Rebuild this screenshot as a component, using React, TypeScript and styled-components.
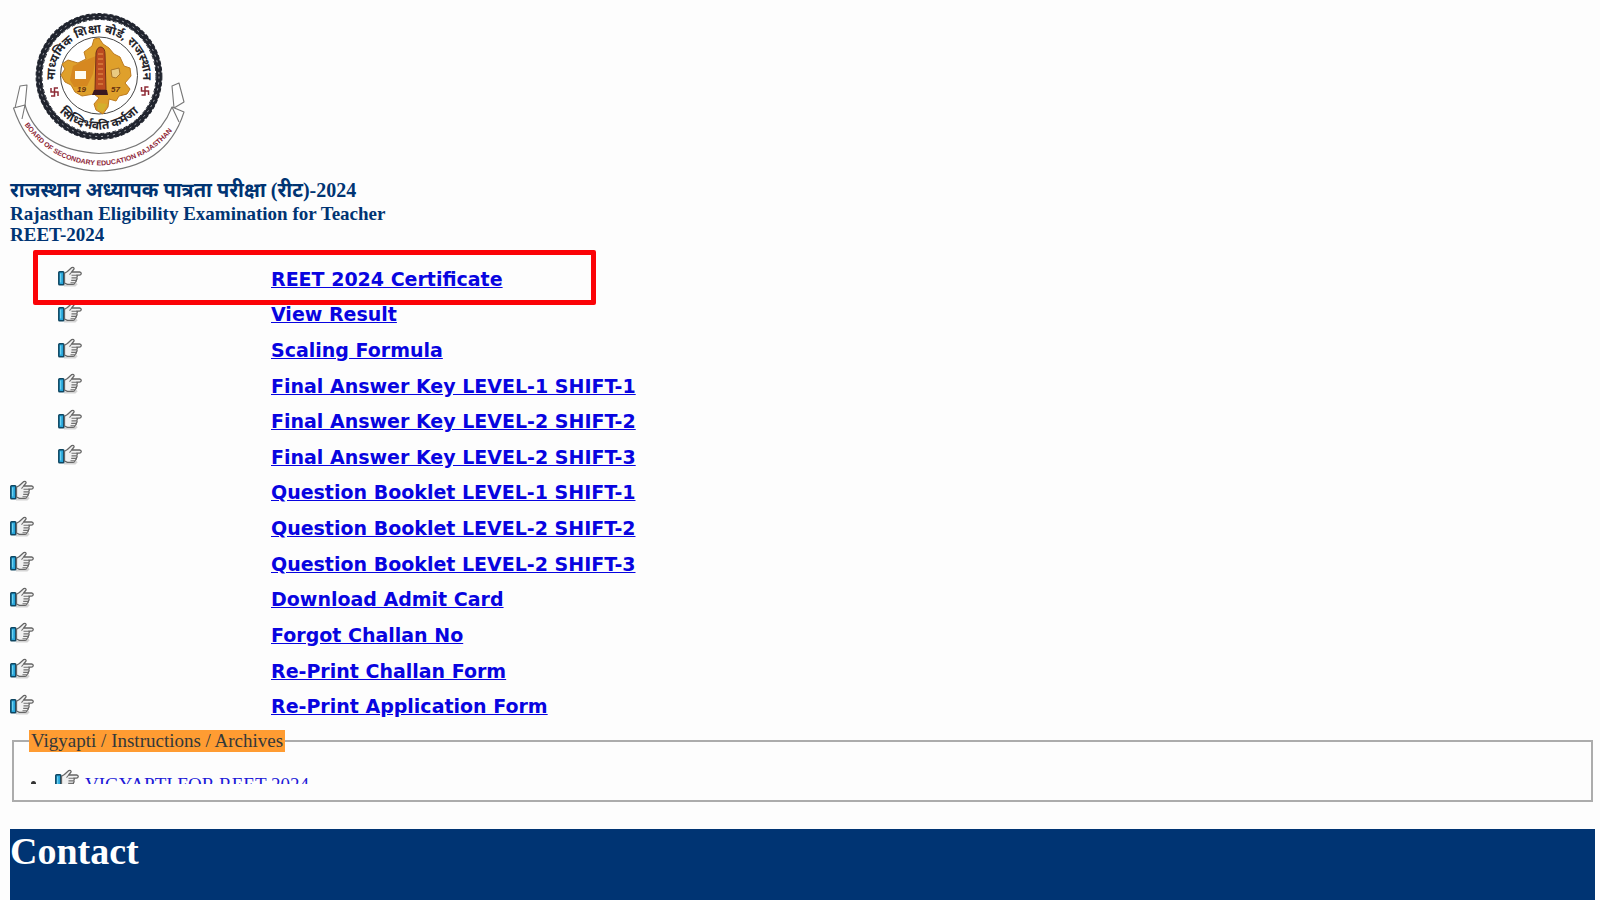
import React from "react";
import styled, { createGlobalStyle } from "styled-components";

const NAVY = "#003473";

const GlobalStyle = createGlobalStyle`
  body {
    margin: 0;
    background: #fdfdfd;
    font-family: "Liberation Serif", "Noto Sans", serif;
    font-size: 19px;
  }
`;

const Page = styled.div`
  display: flex;
  flex-direction: column;
  padding: 10px 5px 0 10px;
  min-height: 100vh;
  box-sizing: border-box;
`;

const Header = styled.header`
  display: flex;
  flex-direction: column;
  align-items: flex-start;
`;

const Titles = styled.h1`
  display: flex;
  flex-direction: column;
  margin: 0;
  color: ${NAVY};
  font-size: 19px;
  line-height: 21px;
  font-weight: bold;
`;

const HindiTitle = styled.span`
  font-size: 20px;
  line-height: 25px;
`;

const Menu = styled.ul`
  display: grid;
  grid-auto-rows: 1fr;
  min-height: 463px;
  margin: 16px 0 0;
  padding: 0;
  list-style: none;
`;

const MenuItem = styled.li<{ $indent?: boolean }>`
  position: relative;
  display: grid;
  grid-template-columns: ${(p) => (p.$indent ? "213px" : "261px")} 1fr;
  padding-left: ${(p) => (p.$indent ? "48px" : "0")};
  align-items: center;

  > svg {
    margin-bottom: 3px;
  }
`;

const MenuLink = styled.a`
  justify-self: start;
  color: #0804e0;
  font-family: "DejaVu Sans", sans-serif;
  font-size: 19px;
  line-height: 28px;
  font-weight: bold;
  text-decoration: underline;
`;

const Highlight = styled.span`
  position: absolute;
  left: 23px;
  top: -11px;
  width: 563px;
  height: 55px;
  box-sizing: border-box;
  border: 5px solid #fb0307;
  border-radius: 2px;
  z-index: 1;
  pointer-events: none;
`;

const Archives = styled.fieldset`
  margin: 6px 2px 0;
  padding: 0 17px 16px;
  border: 2px solid #acacac;
`;

const Legend = styled.legend`
  margin-left: -2px;
  padding: 0 2px;
  background: #ff9c32;
  color: #33383a;
  font-size: 19px;
  line-height: 22px;
`;

const Ticker = styled.div`
  height: 32px;
  overflow: hidden;
`;

const Notices = styled.ul`
  margin: 0;
  padding: 17px 0 0;
  list-style: none;
`;

const Notice = styled.li`
  &::before {
    content: "";
    display: inline-block;
    width: 5px;
    height: 6px;
    margin-right: 19px;
    border-radius: 3px;
    background: #333;
    vertical-align: 4px;
  }
`;

const NoticeLink = styled.a`
  color: #2018d8;
  text-decoration: none;

  > svg {
    margin-right: 6px;
  }
`;

const Footer = styled.footer`
  flex: 1;
  margin-top: 27px;
  min-height: 71px;
  background: ${NAVY};
`;

const FooterTitle = styled.h2`
  margin: 0;
  color: #fff;
  font-size: 38px;
  line-height: 44px;
`;

const Hand = () => (
  <svg width="24" height="22" viewBox="0 0 24 22" aria-hidden="true">
    <path d="M6 19.5h11l2-2" fill="none" stroke="#d4d4d4" strokeWidth="2" />
    <rect x="0.8" y="5.700" width="5" height="13" rx="0.800" fill="#27a5da" stroke="#0f4661" strokeWidth="1.500" />
    <path d="M2.700 7.500v9" stroke="#7fdcf6" strokeWidth="1" />
    <path
      d="M6.500 7.2 9.4 5.5 13.8 1.6Q16 0.800 16.1 2.9L13.7 6H21.6Q23.4 6.3 23.2 7.8 22.9 9.1 21.4 9.1H18.7Q19.7 10.1 18.8 11.5 19.5 13 18.3 14.2 18.5 15.8 17.1 16.5 16.9 18.3 15.2 18.4H9.4L6.500 17Z"
      fill="#f1f1f1"
      stroke="#666"
      strokeWidth="1.3"
      strokeLinejoin="round"
    />
    <path d="M13.5 9.2h5.2M13.5 11.9h5M13.2 14.4h4.8M12.5 16.8h4.2M13.7 6l-2.2 2.6" fill="none" stroke="#707070" strokeWidth="1.100" />
  </svg>
);

const Swastika = ({ x, y }: { x: number; y: number }) => (
  <path
    transform={`translate(${x} ${y})`}
    d="M-3.5-4V0H3.5V4M3.5-4H0V4H-3.5"
    fill="none"
    stroke="#8e2b36"
    strokeWidth="1.5"
  />
);

const Logo = () => (
  <svg width="180" height="168" viewBox="10 10 180 168" role="img" aria-label="Board of Secondary Education Rajasthan">
    <defs>
      <path id="upper" d="M57 90A44 44 0 1 1 141 90" />
      <path id="lower" d="M49 94A53 53 0 0 0 149 94" />
      <path id="ribbon" d="M24 124Q52 164 100 165.500Q145 164 173 130" />
    </defs>
    <g fill="#fff" stroke="#777" strokeWidth="1.1" strokeLinejoin="round">
      <path d="M15 108 20 86 27 85 25 106Z" />
      <path d="M184 102 179 83 172 86 174 108Z" />
      <path d="M13.500 108 25 105Q38 150 99 153.500Q155 151 172 107L184 112Q166 169 99 171Q34 169 13.500 108Z" />
      <path d="M25 105 22 119M172 107 179 122" />
    </g>
    <circle cx="99" cy="76.500" r="63" fill="#fff" />
    <circle cx="99" cy="76.500" r="60" fill="none" stroke="#20242e" strokeWidth="5.500" />
    <circle cx="99" cy="76.500" r="62.800" fill="none" stroke="#20242e" strokeWidth="1.200" strokeDasharray="4 2" />
    <circle cx="99" cy="76.500" r="60" fill="none" stroke="#c9cad0" strokeWidth="0.800" strokeDasharray="2 4" />
    <circle cx="99" cy="76.500" r="57" fill="none" stroke="#20242e" strokeWidth="1" strokeDasharray="4 2" />
    <circle cx="99" cy="75.500" r="38.500" fill="none" stroke="#444" strokeWidth="1" />
    <path
      d="M94 39 99 38 103 44 109 48 114 54 120 57 124 66 130 68 131 76 125 83 130 89 127 94 119 96 116 101 109 99 108 107 103 114 96 110 94 104 99 98 94 94 82 96 75 92 71 85 65 82 61 75 65 69 62 64 68 60 78 63 86 59 84 52 92 46Z"
      fill="#dfa02b"
      stroke="#bd7b20"
      strokeWidth="1"
      strokeLinejoin="round"
    />
    <path d="M86 60 96 56 93 74 87 86 74 87 70 80 73 66Z" fill="#d17d1d" opacity="0.7" />
    <rect x="75" y="71" width="11" height="8" fill="#fffdf2" />
    <path d="M111 70 119 68 120 74 116 78 112 77Z" fill="#e9ca82" stroke="#aa7427" />
    <path d="M98 103 107 104 103 112 97 109Z" fill="#d3b02c" />
    <path d="M96 53Q97 47 101 47 105 48 105 54L106 90H95Z" fill="#bc4b20" stroke="#743018" />
    <path d="M98 54h5M98 59h5M98 64h5M98 69h5M98 74h5M98 79h5M98 84h5" stroke="#e79a4a" strokeWidth="1.200" />
    <path d="M94 90h13l1 5H92Z" fill="#3b1820" />
    <g fill="#653010" fontFamily="Liberation Sans, sans-serif" fontSize="8" fontWeight="bold" fontStyle="italic">
      <text x="77" y="92">19</text>
      <text x="111" y="92">57</text>
    </g>
    <g fill="#25252b" fontFamily="Noto Sans, sans-serif" fontWeight="bold" fontSize="12">
      <text textAnchor="middle"><textPath href="#upper" startOffset="50%">माध्यमिक शिक्षा बोर्ड, राजस्थान</textPath></text>
      <text textAnchor="middle"><textPath href="#lower" startOffset="50%">सिध्दिर्भवति कर्मजा</textPath></text>
    </g>
    <text fill="#8d2637" fontFamily="Liberation Sans, sans-serif" fontWeight="bold" fontSize="7" textAnchor="middle">
      <textPath href="#ribbon" startOffset="50%">BOARD OF SECONDARY EDUCATION RAJASTHAN</textPath>
    </text>
    <Swastika x={54.5} y={92} />
    <Swastika x={145} y={91} />
  </svg>
);

const entries: { label: string; indent?: boolean; marked?: boolean }[] = [
  { label: "REET 2024 Certificate", indent: true, marked: true },
  { label: "View Result", indent: true },
  { label: "Scaling Formula", indent: true },
  { label: "Final Answer Key LEVEL-1 SHIFT-1", indent: true },
  { label: "Final Answer Key LEVEL-2 SHIFT-2", indent: true },
  { label: "Final Answer Key LEVEL-2 SHIFT-3", indent: true },
  { label: "Question Booklet LEVEL-1 SHIFT-1" },
  { label: "Question Booklet LEVEL-2 SHIFT-2" },
  { label: "Question Booklet LEVEL-2 SHIFT-3" },
  { label: "Download Admit Card" },
  { label: "Forgot Challan No" },
  { label: "Re-Print Challan Form" },
  { label: "Re-Print Application Form" },
];

export default function App() {
  return (
    <>
      <GlobalStyle />
      <Page>
        <Header>
          <Logo />
          <Titles>
            <HindiTitle lang="hi">राजस्थान अध्यापक पात्रता परीक्षा (रीट)-2024</HindiTitle>
            <span>Rajasthan Eligibility Examination for Teacher</span>
            <span>REET-2024</span>
          </Titles>
        </Header>
        <Menu>
          {entries.map((e) => (
            <MenuItem key={e.label} $indent={e.indent}>
              {e.marked && <Highlight />}
              <Hand />
              <MenuLink href="#">{e.label}</MenuLink>
            </MenuItem>
          ))}
        </Menu>
        <Archives>
          <Legend>Vigyapti / Instructions / Archives</Legend>
          <Ticker>
            <Notices>
              <Notice>
                <NoticeLink href="#">
                  <Hand />
                  VIGYAPTI FOR REET 2024
                </NoticeLink>
              </Notice>
            </Notices>
          </Ticker>
        </Archives>
        <Footer>
          <FooterTitle>Contact</FooterTitle>
        </Footer>
      </Page>
    </>
  );
}
